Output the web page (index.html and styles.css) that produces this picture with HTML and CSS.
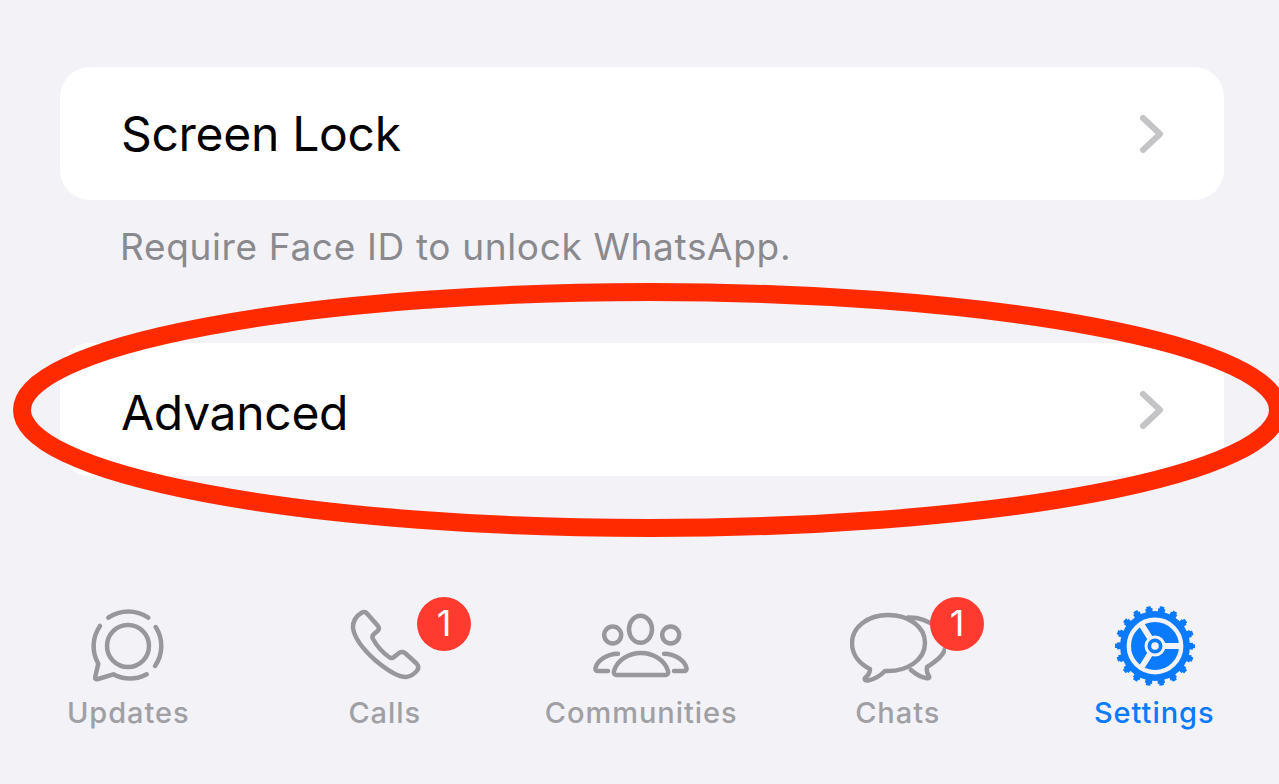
FILE: index.html
```html
<!DOCTYPE html>
<html lang="en">
<head>
    <meta charset="UTF-8">
    <title>Privacy</title>
    <link rel="stylesheet" href="styles.css">
</head>
<body>
    <div class="screen">
        <div class="settings">
            <div class="row">
                <span class="row-title">Screen Lock</span>
                <svg class="chevron" viewBox="0 0 24 38"><path d="M3 3L20 19L3 35"/></svg>
            </div>
            <p class="note">Require Face ID to unlock WhatsApp.</p>
            <div class="row row-advanced">
                <span class="row-title">Advanced</span>
                <svg class="chevron" viewBox="0 0 24 38"><path d="M3 3L20 19L3 35"/></svg>
            </div>
        </div>

        <nav class="tabbar">
            <div class="tab">
                <svg class="tab-icon" viewBox="0 0 96 84">
                    <circle cx="48" cy="42" r="21"/>
                    <path d="M28.3 13.7A35 35 0 0 1 68.3 13.7"/>
                    <path d="M75.7 23A35 35 0 0 1 75 62"/>
                    <path d="M66.7 70.3A35 35 0 0 1 33.3 70.3L18 75Q14.5 75.8 15.3 72.5L18.3 59.7A35 35 0 0 1 20 22"/>
                </svg>
                <span class="tab-label">Updates</span>
            </div>
            <div class="tab">
                <svg class="tab-icon" viewBox="0 0 96 84">
                    <path d="M25 8.5Q28 7 30 9.5L41 22Q43 25 40.5 27L37 30Q34.5 32 36 35Q42 46 52 53Q54.5 55 57 53L62 49Q65 47 68 49L79.500 59.500Q82.500 62.500 80.500 66Q76 72 69 73Q58 73 38 56Q18 38 16 24Q15.5 14 25 8.5Z"/>
                </svg>
                <span class="tab-label">Calls</span>
                <span class="badge">1</span>
            </div>
            <div class="tab">
                <svg class="tab-icon" viewBox="0 0 96 84">
                    <ellipse cx="47.500" cy="25.300" rx="11.500" ry="13.500"/>
                    <circle cx="19.700" cy="31" r="8.500"/>
                    <circle cx="77.700" cy="31" r="8.500"/>
                    <path d="M24 71Q20 71 21 67C24 56 36 49 48 49C60 49 72 56 75 67Q76 71 72 71Z"/>
                    <path d="M25 49.700C14 49.700 4 57 2.500 64Q2 67 5 67L15 67"/>
                    <path d="M71 49.700C82 49.700 92 57 93.500 64Q94 67 91 67L81 67"/>
                </svg>
                <span class="tab-label">Communities</span>
            </div>
            <div class="tab">
                <svg class="tab-icon" viewBox="0 0 96 84">
                    <path d="M58 13.500C80 13 96 28 95 44C94 52 85 58 77 63Q76 68 79 72Q80 75 76 74Q69 73 61 66"/>
                    <path class="bubble" d="M35 67C57 68 75 56 75 39C75 22 58 11 38 11C18 11 2 23 2 39C2 51 10 60 20 65Q20 70 15 74Q14 77 18 76.500Q27 75 35 67Z"/>
                </svg>
                <span class="tab-label">Chats</span>
                <span class="badge">1</span>
            </div>
            <div class="tab tab-active">
                <svg class="tab-icon gear" viewBox="0 0 96 84">
                    <circle class="gear-teeth-base" cx="49" cy="42" r="36"/>
                    <circle class="gear-teeth-tip" cx="49" cy="42" r="38.500"/>
                    <circle class="gear-body" cx="49" cy="42" r="35"/>
                    <circle class="gear-cut" cx="49" cy="42" r="26.200"/>
                    <path class="gear-spoke" d="M49 42L74 42M49 42L35.200 20M49 42L35.200 64"/>
                    <circle class="gear-gap" cx="49" cy="42" r="10.500"/>
                    <circle class="gear-body" cx="49" cy="42" r="7.500"/>
                    <circle class="gear-gap" cx="49" cy="42" r="3.800"/>
                </svg>
                <span class="tab-label">Settings</span>
            </div>
        </nav>

        <svg class="scribble" viewBox="0 0 1279 784"><ellipse cx="650" cy="410" rx="628" ry="118"/></svg>
    </div>
</body>
</html>
```
FILE: styles.css
```css
* {
    margin: 0;
    padding: 0;
    box-sizing: border-box;
}

body {
    background: #f2f2f7;
    font-family: Inter, 'Liberation Sans', sans-serif;
}

.screen {
    position: relative;
    width: 1279px;
    height: 784px;
    overflow: hidden;
    display: flex;
    flex-direction: column;
}

.settings {
    padding: 67px 55px 0 60px;
}

.row {
    display: flex;
    align-items: center;
    justify-content: space-between;
    height: 133px;
    padding: 0 60px 0 61px;
    background: white;
    border-radius: 30px;
}

.row-advanced .row-title {
    padding-top: 6px;
}

.row-title {
    font-size: 48px;
    letter-spacing: -0.3px;
    color: #000;
}

.chevron {
    width: 24px;
    height: 38px;
    fill: none;
    stroke: #c4c4c7;
    stroke-width: 6;
    stroke-linecap: round;
    stroke-linejoin: round;
}

.note {
    height: 143px;
    padding: 24px 0 0 60px;
    font-size: 37px;
    line-height: 46px;
    letter-spacing: 0.65px;
    color: #8a8a8e;
}

.tabbar {
    display: grid;
    grid-template-columns: repeat(5, 256.5px);
    margin-top: auto;
    padding-bottom: 53px;
}

.tab {
    position: relative;
    display: flex;
    flex-direction: column;
    align-items: center;
}

.tab-icon {
    width: 96px;
    height: 84px;
    fill: none;
    stroke: #98989c;
    stroke-width: 4.5;
    stroke-linecap: round;
    stroke-linejoin: round;
}

.bubble {
    fill: #f2f2f7;
}

.tab-label {
    margin-top: 7px;
    font-size: 29px;
    font-weight: 500;
    line-height: 36px;
    letter-spacing: 0.95px;
    color: #a0a0a4;
}

.tab-active .tab-label {
    color: #0a7aff;
}

.badge {
    position: absolute;
    top: -7px;
    left: 160.5px;
    width: 54px;
    height: 54px;
    border-radius: 50%;
    background: #ff3b30;
    color: white;
    font-size: 36px;
    line-height: 52px;
    text-align: center;
}

.gear-teeth-base {
    stroke: #0a7aff;
    stroke-width: 4;
    stroke-linecap: butt;
    stroke-dasharray: 7 5.566;
    stroke-dashoffset: 3.5;
}

.gear-teeth-tip {
    stroke: #0a7aff;
    stroke-width: 3;
    stroke-linecap: butt;
    stroke-dasharray: 4.5 8.94;
    stroke-dashoffset: 2.25;
}

.gear-body {
    fill: #0a7aff;
    stroke: none;
}

.gear-cut {
    stroke: #f2f2f7;
    stroke-width: 4.4;
}

.gear-spoke {
    stroke: #f2f2f7;
    stroke-width: 6;
    stroke-linecap: butt;
}

.gear-gap {
    fill: #f2f2f7;
    stroke: none;
}

.scribble {
    position: absolute;
    top: 0;
    left: 0;
    width: 1279px;
    height: 784px;
    fill: none;
    stroke: #ff2a00;
    stroke-width: 18;
}
```
